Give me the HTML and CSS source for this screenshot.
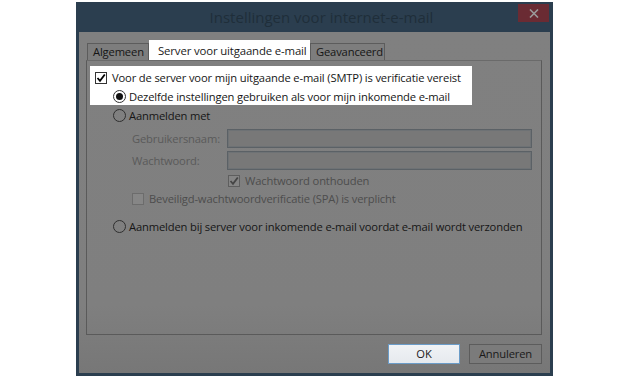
FILE: index.html
```html
<!DOCTYPE html>
<html lang="nl">
<head>
<meta charset="utf-8">
<title>Instellingen voor internet-e-mail</title>
<link rel="stylesheet" href="styles.css">
</head>
<body>
<div class="dialog">
  <div class="titlebar">
    <div class="title">Instellingen voor internet-e-mail</div>
    <div class="close"><svg width="10" height="9" viewBox="0 0 10 9"><path d="M1 0.5 L9 8.5 M9 0.5 L1 8.5" stroke="#9a9a9a" stroke-width="1.6"/></svg></div>
  </div>
  <div class="client">
    <div class="tabs">
      <div class="tab">Algemeen</div>
      <div class="tab active">Server voor uitgaande e-mail</div>
      <div class="tab">Geavanceerd</div>
    </div>
    <div class="panel">
      <div class="highlight">
        <div class="row row-top">
          <span class="cb cb-on"><svg width="10" height="10" viewBox="0 0 10 10"><path d="M1.5 5 L4 7.8 L8.8 1.5" fill="none" stroke="#000" stroke-width="1.8"/></svg></span>
          <span class="label">Voor de server voor mijn uitgaande e-mail (SMTP) is verificatie vereist</span>
        </div>
        <div class="row row-radio1">
          <span class="radio radio-on"><span class="dot"></span></span>
          <span class="label">Dezelfde instellingen gebruiken als voor mijn inkomende e-mail</span>
        </div>
      </div>
      <div class="row row-radio2">
        <span class="radio"></span>
        <span class="label">Aanmelden met</span>
      </div>
      <div class="field-row field-user">
        <span class="flabel">Gebruikersnaam:</span>
        <span class="input"></span>
      </div>
      <div class="field-row field-pass">
        <span class="flabel">Wachtwoord:</span>
        <span class="input"></span>
      </div>
      <div class="row row-remember">
        <span class="cb cb-dis"><svg width="10" height="10" viewBox="0 0 10 10"><path d="M1.5 5 L4 7.8 L8.8 1.5" fill="none" stroke="#454545" stroke-width="1.8"/></svg></span>
        <span class="label dim">Wachtwoord onthouden</span>
      </div>
      <div class="row row-spa">
        <span class="cb cb-off"></span>
        <span class="label dim">Beveiligd-wachtwoordverificatie (SPA) is verplicht</span>
      </div>
      <div class="row row-radio3">
        <span class="radio"></span>
        <span class="label">Aanmelden bij server voor inkomende e-mail voordat e-mail wordt verzonden</span>
      </div>
    </div>
    <div class="buttons">
      <div class="btn btn-ok">OK</div>
      <div class="btn">Annuleren</div>
    </div>
  </div>
</div>
</body>
</html>
```
FILE: styles.css
```css
* { box-sizing: border-box; }
html, body { margin: 0; padding: 0; background: #ffffff; }
body {
  font-family: "Open Sans", "Noto Sans", sans-serif;
  font-size: 11.2px;
  letter-spacing: -0.15px;
  color: #161616;
}
.dialog {
  margin: 2px 0 0 76px;
  width: 477px;
  height: 374px;
  background: #2b3e4f;
  padding: 0 3px 3px 3px;
  display: flex;
  flex-direction: column;
}
.titlebar {
  height: 30px;
  position: relative;
  display: flex;
  align-items: center;
  justify-content: center;
}
.title {
  font-weight: 400;
  font-size: 15px;
  letter-spacing: 0;
  color: #1f2e3a;
  padding-left: 14px;
  padding-bottom: 1px;
  white-space: nowrap;
}
.close {
  position: absolute;
  right: 1px;
  top: 2px;
  width: 31px;
  height: 18px;
  background: #6a2b33;
  display: flex;
  align-items: center;
  justify-content: center;
}
.client {
  flex: 1;
  background: linear-gradient(#808080 0%, #7f7f7f 80%, #777777 100%);
  padding: 0 8px 0 7px;
  display: flex;
  flex-direction: column;
}
.tabs {
  display: flex;
  align-items: flex-end;
  height: 28px;
  padding-left: 1px;
}
.tab {
  height: 17px;
  line-height: 15px;
  padding: 0 5px;
  border: 1px solid #5c5c5c;
  border-bottom: none;
  background: #7d7d7d;
  color: #151515;
  white-space: nowrap;
}
.tab:first-child { width: 62px; }
.tab.active {
  height: 20px;
  line-height: 19px;
  background: #ffffff;
  border-color: #ffffff;
  width: 161px;
  padding: 0 0 0 8px;
  color: #1a1a1a;
  font-size: 11.4px;
}
.tab:last-child { width: 75px; }
.panel {
  height: 275px;
  border: 1px solid #5a5a5a;
  border-top-color: #6a6a6a;
}
.highlight {
  margin: 5px 0 0 3px;
  width: 382px;
  height: 39px;
  background: #ffffff;
  padding-top: 4px;
}
.row {
  display: flex;
  align-items: center;
  height: 15px;
}
.label { white-space: nowrap; }
.dim { color: #4d4d4d; }
.row-top { padding-left: 5px; }
.row-top .label { margin-left: 5px; }
.row-radio1 { margin-top: 4px; padding-left: 23px; }
.row-radio1 .label { margin-left: 3px; }
.row-radio2 { margin-top: 3px; padding-left: 26px; }
.row-radio2 .label { margin-left: 3px; }
.row-radio3 { margin-top: 13px; padding-left: 26px; }
.row-radio3 .label { margin-left: 3px; }
.cb {
  width: 12px;
  height: 12px;
  display: inline-flex;
  align-items: center;
  justify-content: center;
  flex: none;
}
.cb-on { background: #ffffff; border: 1px solid #333333; }
.cb-dis { background: #858585; border: 1px solid #5e5e5e; }
.cb-off { background: #868686; border: 1px solid #6c6c6c; }
.radio {
  width: 13px;
  height: 13px;
  border-radius: 50%;
  border: 1px solid #2f2f2f;
  display: inline-flex;
  align-items: center;
  justify-content: center;
  flex: none;
}
.radio-on { background: #ffffff; border-color: #333333; }
.dot { width: 7px; height: 7px; border-radius: 50%; background: #111111; }
.field-row {
  display: flex;
  align-items: center;
  height: 19px;
  padding-left: 45px;
}
.field-user { margin-top: 6px; }
.field-pass { margin-top: 3px; }
.flabel {
  width: 95px;
  color: #5a5a5a;
  white-space: nowrap;
}
.input {
  width: 305px;
  height: 19px;
  border: 1px solid #5b6166;
  box-shadow: inset 0 0 0 1px #6e7275;
  background: #787878;
}
.row-remember { margin-top: 3px; padding-left: 141px; }
.row-remember .label { margin-left: 5px; }
.row-spa { margin-top: 3px; padding-left: 45px; }
.row-spa .label { margin-left: 5px; }
.buttons {
  display: flex;
  justify-content: flex-end;
  gap: 9px;
  margin-top: 9px;
}
.btn {
  width: 73px;
  height: 20px;
  line-height: 18px;
  text-align: center;
  border: 1px solid #5c5c5c;
  background: #7b7b7b;
  color: #1a1a1a;
}
.btn-ok {
  width: 72px;
  background: linear-gradient(#f0f2f5, #e6e9ee);
  border-color: #6b9cc8;
  color: #1a1a1a;
}
```
